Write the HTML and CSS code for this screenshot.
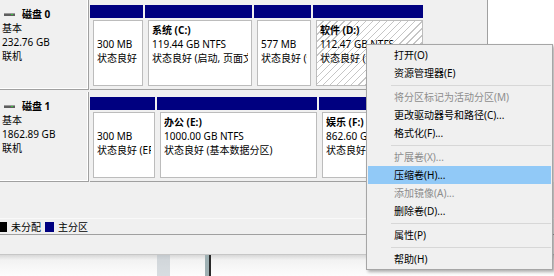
FILE: index.html
```html
<!DOCTYPE html>
<html lang="zh-CN">
<head>
  <meta charset="UTF-8" />
  <title>磁盘管理</title>
  <link rel="stylesheet" href="styles.css">
</head>
<body>

  <div class="window">
    <div class="disks">

      <div class="disk">
        <div class="disk-info">
          <div class="disk-name">
            <svg class="disk-icon" width="11" height="5" viewBox="0 0 11 5">
              <rect x="0" y="1" width="11" height="3" fill="#5e5e5e" />
              <rect x="0" y="1" width="11" height="1" fill="#9a9a9a" />
              <rect x="7" y="2" width="2" height="1" fill="#38c23c" />
            </svg>磁盘 0
          </div>
          <div>基本</div>
          <div>232.76 GB</div>
          <div>联机</div>
        </div>
        <div class="parts">
          <div class="part" style="width:53px">
            <div class="part-bar"></div>
            <div class="part-body"><div class="part-text">
              <div class="part-name">&nbsp;</div>
              <div>300 MB</div>
              <div>状态良好 (EFI 系统分区)</div>
            </div></div>
          </div>
          <div class="part" style="width:107px">
            <div class="part-bar"></div>
            <div class="part-body"><div class="part-text">
              <div class="part-name">系统 (C:)</div>
              <div>119.44 GB NTFS</div>
              <div>状态良好 (启动, 页面文件, 故障转储, 基本数据分区)</div>
            </div></div>
          </div>
          <div class="part" style="width:57px">
            <div class="part-bar"></div>
            <div class="part-body"><div class="part-text">
              <div class="part-name">&nbsp;</div>
              <div>577 MB</div>
              <div>状态良好 (恢复分区)</div>
            </div></div>
          </div>
          <div class="part" style="width:110px">
            <div class="part-bar"></div>
            <div class="part-body selected"><div class="part-text">
              <div class="part-name">软件 (D:)</div>
              <div>112.47 GB NTFS</div>
              <div>状态良好 (基本数据分区)</div>
            </div></div>
          </div>
        </div>
      </div>

      <div class="disk">
        <div class="disk-info">
          <div class="disk-name">
            <svg class="disk-icon" width="11" height="5" viewBox="0 0 11 5">
              <rect x="0" y="1" width="11" height="3" fill="#5e5e5e" />
              <rect x="0" y="1" width="11" height="1" fill="#9a9a9a" />
              <rect x="7" y="2" width="2" height="1" fill="#38c23c" />
            </svg>磁盘 1
          </div>
          <div>基本</div>
          <div>1862.89 GB</div>
          <div>联机</div>
        </div>
        <div class="parts">
          <div class="part" style="width:65px">
            <div class="part-bar"></div>
            <div class="part-body"><div class="part-text">
              <div class="part-name">&nbsp;</div>
              <div>300 MB</div>
              <div>状态良好 (EFI 系统分区)</div>
            </div></div>
          </div>
          <div class="part" style="width:160px">
            <div class="part-bar"></div>
            <div class="part-body"><div class="part-text">
              <div class="part-name">办公 (E:)</div>
              <div>1000.00 GB NTFS</div>
              <div>状态良好 (基本数据分区)</div>
            </div></div>
          </div>
          <div class="part" style="width:166px">
            <div class="part-bar"></div>
            <div class="part-body"><div class="part-text">
              <div class="part-name">娱乐 (F:)</div>
              <div>862.60 GB NTFS</div>
              <div>状态良好 (基本数据分区)</div>
            </div></div>
          </div>
        </div>
      </div>

    </div>

    <div class="lower"></div>

    <div class="legend">
      <span class="swatch swatch-free"></span>
      <span>未分配</span>
      <span class="swatch swatch-primary"></span>
      <span>主分区</span>
    </div>

    <div class="status"></div>
  </div>

  <div class="desktop">
    <div class="glass"></div>
    <div class="edge"></div>
  </div>

  <div class="menu">
    <div class="menu-item">打开(O)</div>
    <div class="menu-item">资源管理器(E)</div>
    <div class="menu-sep"></div>
    <div class="menu-item disabled">将分区标记为活动分区(M)</div>
    <div class="menu-item">更改驱动器号和路径(C)...</div>
    <div class="menu-item">格式化(F)...</div>
    <div class="menu-sep"></div>
    <div class="menu-item disabled">扩展卷(X)...</div>
    <div class="menu-item active">压缩卷(H)...</div>
    <div class="menu-item disabled">添加镜像(A)...</div>
    <div class="menu-item">删除卷(D)...</div>
    <div class="menu-sep"></div>
    <div class="menu-item">属性(P)</div>
    <div class="menu-sep"></div>
    <div class="menu-item">帮助(H)</div>
  </div>

</body>
</html>
```

FILE: styles.css
```css
* { box-sizing: border-box; }
body {
  margin: 0;
  width: 554px;
  height: 276px;
  overflow: hidden;
  position: relative;
  background: #fff;
  color: #000;
  font-family: "Noto Sans", "Noto Sans CJK SC", sans-serif;
  font-size: 10px;
}

.window { background: #f0f0f0; }
.disks { background: #fff; }

.disk {
  display: flex;
  width: 488px;
  height: 92px;
  padding-bottom: 2px;
  background: #f0f0f0;
}
.disk:last-child { height: 90px; padding-bottom: 0; }

.disk-info {
  flex: none;
  width: 89px;
  padding: 7px 0 0 2px;
  line-height: 14px;
  border-right: 1px solid #a0a0a0;
  border-bottom: 1px solid #a0a0a0;
  box-shadow: inset -1px -1px 0 #fff;
}
.disk-name { font-weight: bold; }
.disk-icon { vertical-align: middle; margin: -2px 7px 0 2px; }

.parts {
  flex: none;
  display: flex;
  gap: 2px;
  width: 398px;
  margin-left: 1px;
  padding-top: 5px;
  border-right: 1px solid #a0a0a0;
  border-bottom: 1px solid #a0a0a0;
}
.part {
  flex: none;
  display: flex;
  flex-direction: column;
}
.part-bar { height: 13px; background: #000080; }
.part-body {
  flex: 1;
  margin: 2px 0 3px 3px;
  padding: 2px 3px 0 3px;
  border: 1px solid #bcbcbc;
  background: #fff;
  line-height: 14px;
}
.part-body.selected {
  background: repeating-linear-gradient(135deg, #fff 0 4px, #c6c6c6 4px 5px);
}
.part-text { overflow: hidden; white-space: nowrap; }
.part-name { font-weight: bold; }

.lower { height: 36px; }

.legend {
  display: flex;
  align-items: center;
  gap: 4px;
  height: 17px;
  border-top: 1px solid #f9f9f9;
  border-bottom: 1px solid #a0a0a0;
  overflow: hidden;
}
.swatch { width: 10px; height: 10px; }
.swatch-free { background: #000; margin-left: -3px; }
.swatch-primary { background: #000080; width: 9px; }

.status {
  height: 20px;
  border-bottom: 1px solid #c6c6c6;
}

.desktop {
  display: flex;
  height: 21px;
  background: linear-gradient(#d8d8d8, #f2f2f2 5px, #fdfdfd);
}
.glass {
  width: 13px;
  margin-left: 157px;
  background: rgba(170, 182, 190, 0.45);
}
.edge {
  width: 6px;
  margin-left: 35px;
  background: #9eb0b3;
  border-right: 2px solid #2a2a2a;
}

.menu {
  position: absolute;
  left: 366px;
  top: 44px;
  width: 187px;
  padding: 1px 0;
  background: #f0f0f0;
  border: 1px solid #a6a6a6;
  box-shadow: 2px 2px 3px rgba(0, 0, 0, 0.3);
  line-height: 18px;
  white-space: nowrap;
}
.menu-item {
  height: 18px;
  margin: 0 1px;
  padding-left: 26px;
}
.menu-item.disabled { color: #8d8d8d; }
.menu-item.active { background: #91c9f7; }
.menu-sep {
  height: 1px;
  margin: 3px 1px 2px 24px;
  background: #d7d7d7;
}
```
